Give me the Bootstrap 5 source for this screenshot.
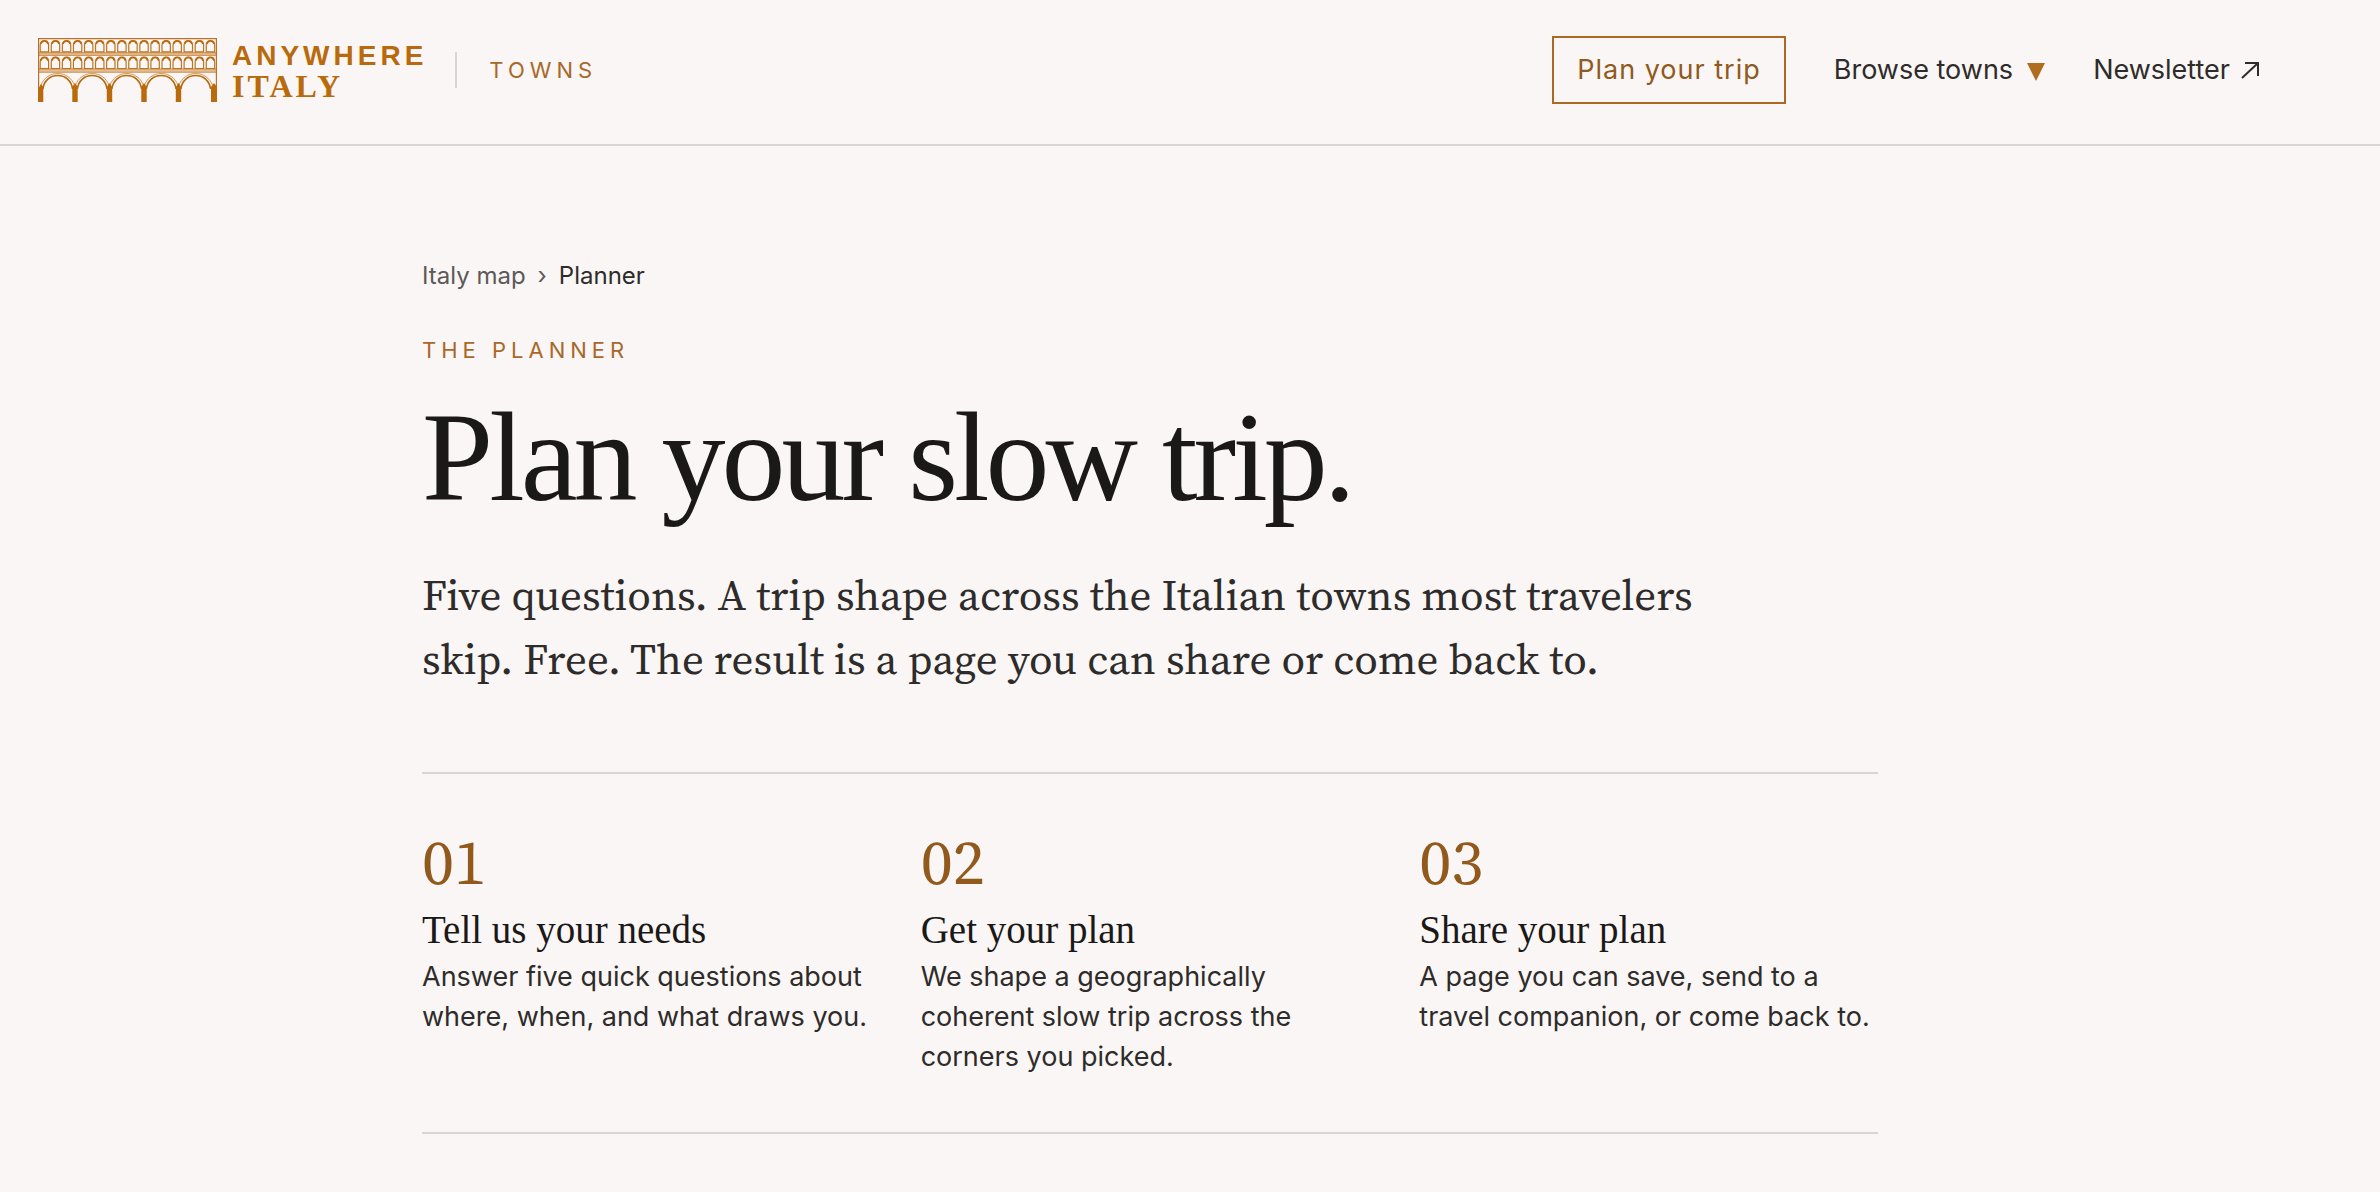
<!DOCTYPE html>
<html lang="en">
<head>
<meta charset="utf-8">
<meta name="viewport" content="width=device-width, initial-scale=1">
<title>Plan your slow trip</title>
<link rel="stylesheet" href="https://cdn.jsdelivr.net/npm/bootstrap@5.3.0/dist/css/bootstrap.min.css">
<style>
  body { background: #faf6f5; color: #2e2c2a; font-family: Inter, "Liberation Sans", sans-serif; font-size: 27px; line-height: 40px; }
  a { text-decoration: none; }
  .site-header { border-bottom: 2px solid #d9d5d3; padding: 36px 120px 40px 38px; }
  .brand { color: #b86a0c; gap: 14px; }
  .brand:hover { color: #b86a0c; }
  .brand-name { padding-top: 2px; }
  .brand-top { font: bold 28px/31px "Liberation Sans", sans-serif; letter-spacing: 4px; }
  .brand-bottom { font: bold 32px/31px "Liberation Serif", serif; letter-spacing: 3px; }
  .brand-rule { width: 2px; height: 36px; background: #d9d5d3; margin: 0 32px 0 28px; }
  .eyebrow { color: #a8682a; font-size: 22px; line-height: 32px; letter-spacing: 5px; }
  .site-nav { gap: 48px; }
  .site-nav a:not(.btn), .menu-toggle { color: #2e2c2a; }
  .menu-toggle { gap: 14px; }
  .btn-plan { border: 2px solid #ab6a24; border-radius: 0; color: #91591c; font-size: 27px; line-height: 40px; letter-spacing: 1px; padding: 12px 23px; }
  .page-main { max-width: 1456px; padding-top: 112px; }
  .shell { padding-right: 80px; }
  .crumbs { color: #5c5957; font-size: 24px; line-height: 36px; gap: 12px; margin-bottom: 40px; }
  .crumbs a { color: #5c5957; }
  .crumbs [aria-current] { color: #2e2c2a; }
  .text-face { font-family: "Source Serif 4", "Liberation Serif", serif; }
  .display-face { font-family: "Liberation Serif", serif; }
  .headline { color: #1a1918; font-size: 128px; line-height: 128px; letter-spacing: -4px; font-weight: 400; margin: 27px 0 42px; }
  .intro { font-size: 43px; line-height: 64px; max-width: 1300px; margin-bottom: 81px; }
  .steps { border-top: 2px solid #d9d5d3; border-bottom: 2px solid #d9d5d3; padding: 56px 0 55px; }
  .steps .row { --bs-gutter-x: 40px; }
  .step-no { color: #91591c; font-size: 64px; line-height: 64px; }
  .step-title { color: #1a1918; font-size: 39px; line-height: 48px; font-weight: 400; margin: 12px 0 3px; }
</style>
</head>
<body>
<header class="site-header d-flex flex-wrap align-items-center justify-content-between gap-4">
  <div class="d-flex align-items-center">
    <a class="brand d-flex align-items-center" href="#" aria-label="Anywhere Italy">
      <svg width="180" height="64" viewBox="0 0 180 64" fill="none" aria-hidden="true">
        <defs>
          <g id="win">
            <path d="M2.2 13.8V7.2C2.2 4.3 4 2.5 6.4 2.5s4.200 1.800 4.200 4.700v6.600z" stroke="#bd7421" stroke-width="1.200"/>
            <path d="M2.800 6C3.400 3.700 4.600 2.900 6.400 2.900s3 .8 3.600 3.100" stroke="#b86a0c" stroke-width="1.500"/>
          </g>
          <g id="win4"><use href="#win"/><use href="#win" x="11.070"/><use href="#win" x="22.140"/><use href="#win" x="33.210"/></g>
          <g id="tier"><use href="#win4"/><use href="#win4" x="44.280"/><use href="#win4" x="88.560"/><use href="#win4" x="132.840"/></g>
          <g id="span">
            <path d="M4.800 51C6 42.500 12 37.500 19.700 37.500S33.400 42.500 34.600 51" stroke="#b86a0c" stroke-width="1.600"/>
            <path d="M2.800 47.500C5.500 40 12 35.500 19.700 35.500s14.200 4.500 16.900 12" stroke="#c98a45" stroke-width=".9"/>
          </g>
        </defs>
        <path d="M0 14.800h179v2.400H0zM0 31h179v3H0z" fill="#e2bd92"/>
        <path d="M0 17.400h179M0 34.300h179M0 14.700h179M0 30.900h179" stroke="#c27b30" stroke-width=".8"/>
        <path d="M.6 64V.6h177.800V64" stroke="#b9702a" stroke-width="1.200"/>
        <use href="#tier"/><use href="#tier" y="16.700"/>
        <use href="#span"/><use href="#span" x="34.500"/><use href="#span" x="69"/><use href="#span" x="103.500"/><use href="#span" x="138"/>
        <path d="M0 64V51l3-5 2.300 3v15zM34.300 64V49l2.700-4 2.700 4v15zM68.800 64V49l2.700-4 2.700 4v15zM103.300 64V49l2.700-4 2.700 4v15zM137.800 64V49l2.700-4 2.700 4v15zM173 64V49l3-4 3 4v15z" fill="#b86a0c"/>
      </svg>
      <span class="brand-name d-flex flex-column"><span class="brand-top">ANYWHERE</span><span class="brand-bottom">ITALY</span></span>
    </a>
    <span class="brand-rule"></span>
    <span class="eyebrow">TOWNS</span>
  </div>
  <nav class="site-nav d-flex flex-wrap align-items-center" aria-label="Main">
    <a class="btn btn-plan" href="#">Plan your trip</a>
    <button class="menu-toggle d-flex align-items-center border-0 bg-transparent p-0" type="button" aria-expanded="false">Browse towns
      <svg width="18" height="22" viewBox="0 0 18 22" aria-hidden="true"><path d="M0 4h18L9 22z" fill="#b06c1f"/></svg>
    </button>
    <a class="d-flex align-items-center gap-2" href="#">Newsletter
      <svg width="22" height="18" viewBox="0 0 22 18" fill="none" stroke="#2e2c2a" stroke-width="2" aria-hidden="true"><path d="M7 2h13v13M20 2 4 17"/></svg>
    </a>
  </nav>
</header>
<div class="shell">
  <main class="page-main mx-auto">
    <nav class="crumbs d-flex" aria-label="Breadcrumb">
      <a href="#">Italy map</a><span aria-hidden="true">›</span><span aria-current="page">Planner</span>
    </nav>
    <div class="eyebrow">THE PLANNER</div>
    <h1 class="headline display-face">Plan your slow trip.</h1>
    <p class="intro text-face">Five questions. A trip shape across the Italian towns most travelers skip. Free. The result is a page you can share or come back to.</p>
    <section class="steps">
      <div class="row row-cols-1 row-cols-lg-3">
        <div class="col">
          <div class="step-no text-face">01</div>
          <h2 class="step-title display-face">Tell us your needs</h2>
          <p class="mb-0">Answer five quick questions about where, when, and what draws you.</p>
        </div>
        <div class="col">
          <div class="step-no text-face">02</div>
          <h2 class="step-title display-face">Get your plan</h2>
          <p class="mb-0">We shape a geographically coherent slow trip across the corners you picked.</p>
        </div>
        <div class="col">
          <div class="step-no text-face">03</div>
          <h2 class="step-title display-face">Share your plan</h2>
          <p class="mb-0">A page you can save, send to a travel companion, or come back to.</p>
        </div>
      </div>
    </section>
  </main>
</div>
<script src="https://cdn.jsdelivr.net/npm/bootstrap@5.3.0/dist/js/bootstrap.bundle.min.js"></script>
</body>
</html>
